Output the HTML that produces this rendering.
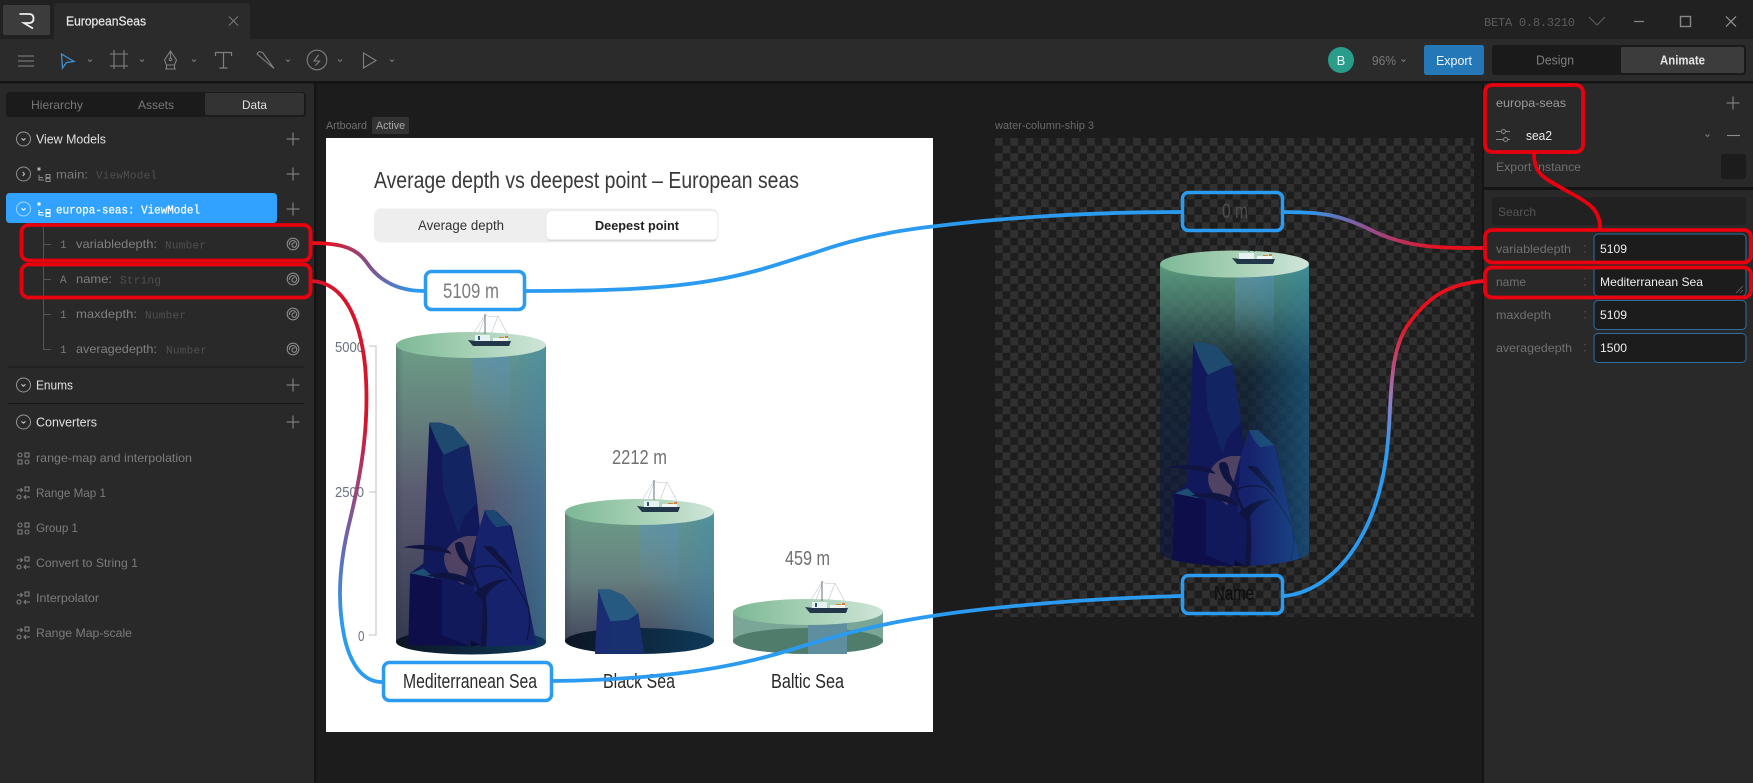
<!DOCTYPE html>
<html><head><meta charset="utf-8"><title>EuropeanSeas</title>
<style>
html,body{margin:0;padding:0;background:#1c1c1c;width:1753px;height:783px;overflow:hidden}
svg{display:block}
text{font-family:"Liberation Sans",sans-serif}
text.m{font-family:"Liberation Mono",monospace}
</style></head><body>
<svg width="1753" height="783" viewBox="0 0 1753 783">
<defs>
<pattern id="chk" x="995" y="138" width="15.34" height="15.34" patternUnits="userSpaceOnUse">
<rect width="15.34" height="15.34" fill="#1d1d1d"/><rect width="7.67" height="7.67" fill="#303030"/><rect x="7.67" y="7.67" width="7.67" height="7.67" fill="#303030"/>
</pattern>
<linearGradient id="top" x1="0" x2="1" y1="0" y2="0"><stop offset="0" stop-color="#7db897"/><stop offset=".5" stop-color="#a6d0b4"/><stop offset="1" stop-color="#cfe5d9"/></linearGradient>
<linearGradient id="bodyA" x1="0" x2="0" y1="0" y2="1"><stop offset="0" stop-color="#6c9c87"/><stop offset=".25" stop-color="#657f7c"/><stop offset=".5" stop-color="#5a5a70"/><stop offset="1" stop-color="#363a50"/></linearGradient>
<linearGradient id="bodyB" x1="0" x2="0" y1="0" y2="1"><stop offset="0" stop-color="#6c9c87"/><stop offset=".5" stop-color="#66807f"/><stop offset="1" stop-color="#45495f"/></linearGradient>
<linearGradient id="bodyD" x1="0" x2="0" y1="0" y2="1"><stop offset="0" stop-color="#5a9a80"/><stop offset=".14" stop-color="#4a7f70" stop-opacity=".85"/><stop offset=".36" stop-color="#10263a" stop-opacity=".7"/><stop offset="1" stop-color="#0c1240" stop-opacity=".65"/></linearGradient>
<linearGradient id="side" x1="0" x2="1" y1="0" y2="0"><stop offset="0" stop-color="#1f2d3d" stop-opacity=".2"/><stop offset=".05" stop-color="#1f2d3d" stop-opacity="0"/><stop offset=".55" stop-color="#3a88b0" stop-opacity="0"/><stop offset="1" stop-color="#3a88b0" stop-opacity=".55"/></linearGradient>
<linearGradient id="sideD" x1="0" x2="1" y1="0" y2="0"><stop offset=".6" stop-color="#1f7fb0" stop-opacity="0"/><stop offset="1" stop-color="#1f7fb0" stop-opacity=".45"/></linearGradient>
<linearGradient id="beam" x1="0" x2="0" y1="0" y2="1"><stop offset="0" stop-color="#5b8fb5" stop-opacity=".65"/><stop offset="1" stop-color="#5b8fb5" stop-opacity="0"/></linearGradient>
<linearGradient id="floor" x1="0" x2="1" y1="0" y2="0"><stop offset="0" stop-color="#0c1524"/><stop offset="1" stop-color="#0f3a5a"/></linearGradient>
<linearGradient id="g1" gradientUnits="userSpaceOnUse" x1="325" y1="0" x2="415" y2="0"><stop offset="0" stop-color="#e8101c"/><stop offset=".5" stop-color="#80508f"/><stop offset="1" stop-color="#2a9bf0"/></linearGradient>
<linearGradient id="g2" gradientUnits="userSpaceOnUse" x1="1305" y1="0" x2="1440" y2="0"><stop offset="0" stop-color="#2a9bf0"/><stop offset=".5" stop-color="#9b4a8a"/><stop offset="1" stop-color="#e8101c"/></linearGradient>
<linearGradient id="g3" gradientUnits="userSpaceOnUse" x1="0" y1="420" x2="0" y2="625"><stop offset="0" stop-color="#d8142a"/><stop offset=".5" stop-color="#7a5aa0"/><stop offset="1" stop-color="#2a9bf0"/></linearGradient>
<linearGradient id="g4" gradientUnits="userSpaceOnUse" x1="0" y1="450" x2="0" y2="320"><stop offset="0" stop-color="#2a9bf0"/><stop offset=".4" stop-color="#9a7ac0"/><stop offset="1" stop-color="#e8101c"/></linearGradient>
<clipPath id="cyl"><path d="M1160 264V552A74.500 14 0 0 0 1309 552V264Z"/></clipPath>
<g id="ship">
<g fill="none" stroke="#c0c7cc" stroke-width=".6"><path d="M17 1L2 25M30 2L42 25M17 3L9 24M30 2L23 20M17 1Q24 4 30 2"/></g>
<path d="M17 0V20" stroke="#67727c" stroke-width="1"/>
<path d="M7 21H22V27H7Z" fill="#e6f2f2"/><path d="M10 22h2v4h-2z" fill="#2a5a7a"/>
<path d="M25 24H40V28H25Z" fill="#eef5f0"/><path d="M31 23h5v1h-5zM37 22h3v2h-3z" fill="#d5803a"/>
<path d="M0 26L8 27H30L43 27L41 32H5Z" fill="#22384a"/>
</g>
<g id="rocks">
<path d="M328 278L310 700L270 730L265 945L650 945L620 800L575 590L530 545L495 540L480 600L470 500L447 345L400 290L360 278Z" fill="#12195a"/>
<path d="M328 278L360 278L400 290L447 345L420 352L372 375Q345 330 328 278Z" fill="#1f4a70"/>
<path d="M365 378L420 352L447 345L470 500V520L432 560L415 610L370 480Z" fill="#122562"/>
<path d="M495 540L522 540L570 585L640 900L650 945L500 950L490 810L460 790L470 620Z" fill="#16226c"/>
<path d="M495 540L522 540L570 585L530 592Q505 570 495 540Z" fill="#1c4672"/>
<path d="M272 730L310 715L345 745L365 750V915L450 948L265 945Z" fill="#0e0f4a"/>
<path d="M272 730L310 715L345 745Z" fill="#1d4f72"/>
<path d="M440 618Q385 630 372 680Q370 730 430 765L470 618Z" fill="#4f4263"/>
<g fill="#0f1440">
<path d="M248 652Q300 640 345 648Q380 650 395 672Q345 660 248 652Z"/>
<path d="M405 640Q430 625 435 660Q440 690 468 722Q440 712 420 685Q405 660 405 640Z"/>
<path d="M320 738Q385 715 445 745Q460 755 465 770Q400 745 320 738Z"/>
<path d="M490 650Q520 640 535 672Q570 705 578 735Q530 690 490 650Z"/>
<path d="M462 790Q510 745 565 748Q520 762 498 800Q505 880 498 950H480Q490 880 488 810Z"/>
</g>
<g fill="none" stroke="#0f1440" stroke-linecap="round">
<path d="M440 690Q460 740 490 810" stroke-width="8"/>
<path d="M465 715Q510 700 545 715Q590 760 625 830Q635 880 620 930" stroke-width="4"/>
</g>
<path d="M452 930L480 945L452 950Z" fill="#0b0e34"/>
</g>
<g id="spiral" fill="none" stroke="#8a8a8a" stroke-width="1.100"><circle r="5.800"/><path d="M-3.500 1A3.600 3.600 0 1 1 2.500 2.800A2.200 2.200 0 1 1 1.800-1"/></g>
<g id="plus" stroke="#8d8d8d" stroke-width="1"><path d="M-6.500 0H6.500M0-6.500V6.500"/></g>
<g id="cdown"><circle r="7" fill="none" stroke="#969696" stroke-width="1"/><path d="M-2-.6L0 1.100L2-.6" fill="none" stroke="#c8c8c8" stroke-width="1.100"/></g>
<g id="vm" fill="none" stroke="#8a8a8a" stroke-width="1"><rect x="-3.500" y="-7.500" width="3" height="3" fill="#b0b0b0" stroke="none"/><path d="M-2 0V5H3M-2 2.500H2"/><rect x="5" y="-.500" width="4" height="3"/><rect x="5" y="3.500" width="4" height="3"/></g>
<g id="grp" fill="none" stroke="#7e7e7e" stroke-width="1.100"><rect x="-5" y="-5" width="4" height="4" rx="2"/><rect x="2" y="-5" width="4" height="4"/><rect x="-5" y="2" width="4" height="4"/><rect x="2" y="2" width="4" height="4" rx="2"/></g>
<g id="conv" fill="none" stroke="#7e7e7e" stroke-width="1.100"><path d="M-6-3H-.500M-2.500-5L-.500-3L-2.500-1"/><rect x="2" y="-6" width="4" height="4"/><circle cx="-4" cy="4" r="2"/><path d="M7 4H1M3 2L1 4L3 6"/></g>
<path id="chev" d="M-2-1L0 1L2-1" fill="none" stroke="#7a7a7a" stroke-width="1"/>
</defs>

<!-- window chrome -->
<rect width="1753" height="783" fill="#1c1c1c"/>
<rect width="1753" height="39" fill="#212121"/>
<rect x="3" y="5" width="47" height="30" rx="2" fill="#3c3c3c"/>
<path d="M19.500 14H29Q33.500 14 33.500 18.500Q33.500 23 29 23H24L33 28.500" fill="none" stroke="#eee" stroke-width="1.800"/>
<path d="M54 39V7Q54 3 58 3H246Q250 3 250 7V39Z" fill="#2b2b2b"/>
<text x="66" y="25.500" font-size="12.500" fill="#e8e8e8" stroke="#e8e8e8" stroke-width=".2" textLength="80" lengthAdjust="spacingAndGlyphs">EuropeanSeas</text>
<path d="M229 16.500L238 25.500M238 16.500L229 25.500" stroke="#777" stroke-width="1.100"/>
<text class="m" x="1484" y="26" font-size="12" fill="#5c5c5c" textLength="91">BETA 0.8.3210</text>
<path d="M1589 17L1597 25L1605 17" fill="none" stroke="#5c5c5c" stroke-width="1.100"/>
<path d="M1634 21.500H1644" stroke="#888" stroke-width="1.200"/>
<rect x="1680.500" y="16.500" width="10" height="10" fill="none" stroke="#888" stroke-width="1.400"/>
<path d="M1726 16.500L1736 26.500M1736 16.500L1726 26.500" stroke="#999" stroke-width="1.200"/>

<!-- toolbar -->
<rect y="39" width="1753" height="42" fill="#2b2b2b"/>
<rect y="81" width="1753" height="2.500" fill="#141414"/>
<path d="M18 56H34M18 61H34M18 66H34" stroke="#868686" stroke-width="1.100"/>
<path d="M61.500 54L74 61.500L66.500 62.500L62.500 68Z" fill="none" stroke="#3f8fd0" stroke-width="1.300"/>
<use href="#chev" x="90" y="60.500"/>
<path d="M110 54H128M110 66H128M114 50V69M124 50V69" stroke="#808080" stroke-width="1.100"/>
<use href="#chev" x="142" y="60.500"/>
<path d="M170.500 51L176.500 60L174.500 65H166.500L164.500 60ZM170.500 51V58M165 69H176M166.500 65V69M174.500 65V69" fill="none" stroke="#808080" stroke-width="1.100"/>
<circle cx="170.500" cy="59.500" r="1.300" fill="none" stroke="#808080"/>
<use href="#chev" x="194" y="60.500"/>
<path d="M215.500 56V52.500H231.500V56M223.500 52.500V68M219.500 68H227.500" fill="none" stroke="#808080" stroke-width="1.200"/>
<path d="M257 54Q259 50 263 53L274 68.500Z" fill="none" stroke="#808080" stroke-width="1.100"/>
<use href="#chev" x="288" y="60.500"/>
<circle cx="317" cy="60" r="9.800" fill="none" stroke="#808080" stroke-width="1.100"/>
<path d="M318.500 55L314 61H319.500L315.500 65.500" fill="none" stroke="#808080" stroke-width="1.100"/>
<use href="#chev" x="340" y="60.500"/>
<path d="M363.500 53L376 60.500L363.500 68Z" fill="none" stroke="#808080" stroke-width="1.100"/>
<use href="#chev" x="392" y="60.500"/>
<circle cx="1341" cy="60" r="13" fill="#2a9d8a"/>
<text x="1341" y="65" font-size="13" fill="#e8f5f2" text-anchor="middle">B</text>
<text x="1372" y="65" font-size="13" fill="#7a7a7a" textLength="24" lengthAdjust="spacingAndGlyphs">96%</text>
<use href="#chev" x="1403.500" y="60.500"/>
<rect x="1424" y="45" width="60" height="30" rx="2.500" fill="#2478b8"/>
<text x="1436" y="65" font-size="13" fill="#f0f6fb" textLength="36" lengthAdjust="spacingAndGlyphs">Export</text>
<rect x="1492" y="45" width="254" height="30" rx="3" fill="#1a1a1a"/>
<rect x="1621" y="47" width="123" height="26" rx="2" fill="#3c3c3c"/>
<text x="1536" y="64.500" font-size="12.500" fill="#7e7e7e" textLength="38" lengthAdjust="spacingAndGlyphs">Design</text>
<text x="1660" y="64.500" font-size="12.500" fill="#e4e4e4" font-weight="bold" textLength="45" lengthAdjust="spacingAndGlyphs">Animate</text>

<!-- left panel -->
<rect y="83.500" width="314" height="700" fill="#292929"/>
<rect x="6" y="92" width="300" height="25" rx="3" fill="#1b1b1b"/>
<rect x="205" y="93" width="99" height="22" rx="2" fill="#333"/>
<text x="31" y="109" font-size="12" fill="#777" textLength="52" lengthAdjust="spacingAndGlyphs">Hierarchy</text>
<text x="138" y="109" font-size="12" fill="#777" textLength="36" lengthAdjust="spacingAndGlyphs">Assets</text>
<text x="242" y="109" font-size="12" fill="#e0e0e0" textLength="25" lengthAdjust="spacingAndGlyphs">Data</text>

<use href="#cdown" x="23.500" y="139"/>
<text x="36" y="143.500" font-size="12.500" fill="#e0e0e0" textLength="70" lengthAdjust="spacingAndGlyphs">View Models</text>
<use href="#plus" x="293" y="139"/>
<g transform="translate(23.500 174)"><circle r="7" fill="none" stroke="#8f8f8f"/><path d="M-.800-2L1 0L-.800 2" fill="none" stroke="#c0c0c0" stroke-width="1.100"/></g>
<use href="#vm" x="41" y="175"/>
<text x="56" y="178.500" font-size="12" fill="#7a7a7a" textLength="32" lengthAdjust="spacingAndGlyphs">main:</text>
<text class="m" x="96" y="178.500" font-size="11" fill="#4f4f4f" textLength="61">ViewModel</text>
<use href="#plus" x="293" y="174"/>
<path d="M6 197Q6 193 10 193H273Q277 193 277 197V219Q277 223 273 223H10Q6 223 6 219Z" fill="#31a2ff"/>
<g transform="translate(23.500 209)"><circle r="7" fill="none" stroke="#a5d7ff"/><path d="M-2-.6L0 1.100L2-.6" fill="none" stroke="#fff" stroke-width="1.100"/></g>
<g transform="translate(41 210)" fill="none" stroke="#fff" stroke-width="1"><rect x="-3.500" y="-7.500" width="3" height="3" fill="#fff" stroke="none"/><path d="M-2 0V5H3M-2 2.500H2"/><rect x="5" y="-.500" width="4" height="3"/><rect x="5" y="3.500" width="4" height="3"/></g>
<text class="m" x="56" y="213.500" font-size="12" fill="#fff" stroke="#fff" stroke-width=".25" textLength="144" lengthAdjust="spacingAndGlyphs">europa-seas: ViewModel</text>
<use href="#plus" x="293" y="209"/>
<path d="M43.500 224V349.500H51M43.500 244.500H51M43.500 279.500H51M43.500 314.500H51" fill="none" stroke="#555" stroke-width="1"/>
<text class="m" x="60" y="248" font-size="11" fill="#7a7a7a">1</text>
<text class="m" x="60" y="283" font-size="11" fill="#7a7a7a">A</text>
<text class="m" x="60" y="318" font-size="11" fill="#7a7a7a">1</text>
<text class="m" x="60" y="353" font-size="11" fill="#7a7a7a">1</text>
<text x="76" y="248" font-size="12" fill="#7f7f7f" textLength="81" lengthAdjust="spacingAndGlyphs">variabledepth:</text>
<text class="m" x="165" y="248.500" font-size="11" fill="#505050" textLength="41">Number</text>
<text x="76" y="283" font-size="12" fill="#7f7f7f" textLength="36" lengthAdjust="spacingAndGlyphs">name:</text>
<text class="m" x="120" y="283.500" font-size="11" fill="#505050" textLength="41">String</text>
<text x="76" y="318" font-size="12" fill="#7f7f7f" textLength="61" lengthAdjust="spacingAndGlyphs">maxdepth:</text>
<text class="m" x="145" y="318.500" font-size="11" fill="#505050" textLength="41">Number</text>
<text x="76" y="353" font-size="12" fill="#7f7f7f" textLength="81" lengthAdjust="spacingAndGlyphs">averagedepth:</text>
<text class="m" x="166" y="353.500" font-size="11" fill="#505050" textLength="41">Number</text>
<use href="#spiral" x="293" y="244"/><use href="#spiral" x="293" y="279"/><use href="#spiral" x="293" y="314"/><use href="#spiral" x="293" y="349"/>
<path d="M8 367H304M8 403.500H304" stroke="#161616" stroke-width="1"/>
<use href="#cdown" x="23.500" y="385"/>
<text x="36" y="389.500" font-size="12.500" fill="#e0e0e0" textLength="37" lengthAdjust="spacingAndGlyphs">Enums</text>
<use href="#plus" x="293" y="385"/>
<use href="#cdown" x="23.500" y="422"/>
<text x="36" y="426.500" font-size="12.500" fill="#e0e0e0" textLength="61" lengthAdjust="spacingAndGlyphs">Converters</text>
<use href="#plus" x="293" y="422"/>
<use href="#grp" x="23" y="458"/>
<text x="36" y="462" font-size="12" fill="#7c7c7c" textLength="156" lengthAdjust="spacingAndGlyphs">range-map and interpolation</text>
<use href="#conv" x="23" y="493"/>
<text x="36" y="497" font-size="12" fill="#7c7c7c" textLength="70" lengthAdjust="spacingAndGlyphs">Range Map 1</text>
<use href="#grp" x="23" y="528"/>
<text x="36" y="532" font-size="12" fill="#7c7c7c" textLength="42" lengthAdjust="spacingAndGlyphs">Group 1</text>
<use href="#conv" x="23" y="563"/>
<text x="36" y="567" font-size="12" fill="#7c7c7c" textLength="102" lengthAdjust="spacingAndGlyphs">Convert to String 1</text>
<use href="#conv" x="23" y="598"/>
<text x="36" y="602" font-size="12" fill="#7c7c7c" textLength="63" lengthAdjust="spacingAndGlyphs">Interpolator</text>
<use href="#conv" x="23" y="633"/>
<text x="36" y="637" font-size="12" fill="#7c7c7c" textLength="96" lengthAdjust="spacingAndGlyphs">Range Map-scale</text>
<rect x="314" y="83" width="2.500" height="700" fill="#141414"/>

<!-- canvas labels -->
<text x="326" y="129" font-size="11" fill="#707070" textLength="41" lengthAdjust="spacingAndGlyphs">Artboard</text>
<rect x="372" y="117" width="37" height="17" rx="2" fill="#333"/>
<text x="376" y="129" font-size="11" fill="#a8a8a8" textLength="29" lengthAdjust="spacingAndGlyphs">Active</text>
<text x="995" y="129" font-size="11" fill="#6a6a6a" textLength="99" lengthAdjust="spacingAndGlyphs">water-column-ship 3</text>

<!-- left artboard -->
<rect x="326" y="138" width="607" height="594" fill="#fff"/>
<text x="374" y="188" font-size="23" fill="#3a3a3a" textLength="425" lengthAdjust="spacingAndGlyphs">Average depth vs deepest point – European seas</text>
<rect x="374" y="208.500" width="344" height="34" rx="7" fill="#eeeeee"/>
<rect x="546" y="210.500" width="172" height="30" rx="6" fill="#fff" stroke="#dcdcdc" stroke-width=".6"/>
<rect x="548" y="239.500" width="168" height="1.500" rx=".7" fill="#d8d8d8"/>
<text x="418" y="230" font-size="13.500" fill="#333" textLength="86" lengthAdjust="spacingAndGlyphs">Average depth</text>
<text x="595" y="230" font-size="13" fill="#222" font-weight="bold" textLength="84" lengthAdjust="spacingAndGlyphs">Deepest point</text>

<path d="M369 346H376V635H369M369 492H376" fill="none" stroke="#c0c0c0" stroke-width="1"/>
<text x="335" y="352" font-size="15" fill="#6b7280" textLength="29" lengthAdjust="spacingAndGlyphs">5000</text>
<text x="335" y="497" font-size="15" fill="#6b7280" textLength="29" lengthAdjust="spacingAndGlyphs">2500</text>
<text x="358" y="641" font-size="15" fill="#6b7280" textLength="6.500" lengthAdjust="spacingAndGlyphs">0</text>

<!-- Mediterranean cylinder -->
<path d="M396 345V642H546V345Z" fill="url(#bodyA)"/>
<path d="M396 345V642H546V345Z" fill="url(#side)"/>
<rect x="471" y="352" width="39" height="70" fill="url(#beam)"/>
<ellipse cx="471" cy="642" rx="75" ry="12.500" fill="url(#floor)"/>
<use href="#rocks" transform="translate(320 330) scale(.33333)"/>
<ellipse cx="471" cy="345" rx="75" ry="13" fill="url(#top)"/>
<use href="#ship" x="468" y="314"/>

<!-- Black sea cylinder -->
<path d="M565 512V641H714V512Z" fill="url(#bodyB)"/>
<path d="M565 512V641H714V512Z" fill="url(#side)"/>
<rect x="639.500" y="520" width="39" height="70" fill="url(#beam)"/>
<ellipse cx="639.500" cy="641" rx="74.500" ry="13" fill="url(#floor)"/>
<g transform="translate(540 430) scale(.33333)">
<path d="M175 478L210 478L250 495L295 550L312 672H165Z" fill="#1a2c72"/>
<path d="M175 478L210 478L250 495L295 550L265 570L212 574Q190 530 175 478Z" fill="#265a80"/>
<path d="M212 574L265 570L295 550L312 672H208Z" fill="#18306f"/>
</g>
<ellipse cx="639.500" cy="512" rx="74.500" ry="13" fill="url(#top)"/>
<use href="#ship" x="637" y="480"/>

<!-- Baltic cylinder -->
<path d="M733 612V641A75 13 0 0 0 883 641V612Z" fill="#7aa697"/>
<ellipse cx="808" cy="641" rx="75" ry="13" fill="#507c6b"/>
<rect x="808" y="622" width="39" height="32" fill="#5f8f9f"/>
<ellipse cx="808" cy="612" rx="75" ry="13" fill="url(#top)"/>
<use href="#ship" x="805" y="581"/>

<text x="612" y="464" font-size="20" fill="#707070" textLength="55" lengthAdjust="spacingAndGlyphs">2212 m</text>
<text x="785" y="565" font-size="20" fill="#707070" textLength="45" lengthAdjust="spacingAndGlyphs">459 m</text>
<text x="443" y="298" font-size="21" fill="#7c7c7c" textLength="56" lengthAdjust="spacingAndGlyphs">5109 m</text>
<text x="403" y="688" font-size="20" fill="#2a2a2a" textLength="134" lengthAdjust="spacingAndGlyphs">Mediterranean Sea</text>
<text x="603" y="688" font-size="20" fill="#2a2a2a" textLength="72" lengthAdjust="spacingAndGlyphs">Black Sea</text>
<text x="771" y="688" font-size="20" fill="#2a2a2a" textLength="73" lengthAdjust="spacingAndGlyphs">Baltic Sea</text>

<!-- right artboard -->
<rect x="995" y="138" width="479" height="479" fill="url(#chk)"/>
<g clip-path="url(#cyl)">
<rect x="1160" y="264" width="149" height="305" fill="url(#bodyD)"/>
<rect x="1235" y="272" width="39" height="70" fill="url(#beam)"/>
<use href="#rocks" transform="translate(1084 250) scale(.33333)"/>
<rect x="1160" y="264" width="149" height="305" fill="url(#sideD)"/>
</g>
<ellipse cx="1234.500" cy="264" rx="74.500" ry="13.500" fill="url(#top)"/>
<g transform="translate(1232 232)">
<path d="M17 0V20M30 2L22 20" stroke="#2a3a44" stroke-width=".7" fill="none"/>
<path d="M7 21H22V27H7Z" fill="#e6f2f2"/><path d="M25 24H40V28H25Z" fill="#eef5f0"/><path d="M31 23h5v1h-5zM37 22h3v2h-3z" fill="#d5803a"/>
<path d="M0 26L8 27H30L43 27L41 32H5Z" fill="#22384a"/>
</g>
<text x="1222" y="218" font-size="21" fill="#4c4c4c" textLength="26" lengthAdjust="spacingAndGlyphs">0 m</text>
<text x="1214" y="600" font-size="20" fill="#0c0c0c" textLength="40" lengthAdjust="spacingAndGlyphs">Name</text>

<!-- right panel -->
<rect x="1482" y="83" width="2" height="700" fill="#141414"/>
<rect x="1484" y="83.500" width="269" height="700" fill="#292929"/>
<rect x="1484" y="187" width="269" height="3" fill="#141414"/>
<text x="1496" y="107" font-size="12" fill="#9a9a9a" textLength="70" lengthAdjust="spacingAndGlyphs">europa-seas</text>
<use href="#plus" x="1733" y="103"/>
<path d="M1496 131.500H1501M1506 131.500H1510M1496 139.500H1503M1508 139.500H1510" stroke="#888" stroke-width="1"/>
<circle cx="1503.500" cy="131.500" r="2" fill="none" stroke="#888"/><circle cx="1505.500" cy="139.500" r="2" fill="none" stroke="#888"/>
<text x="1526" y="140" font-size="12.500" fill="#eaeaea" textLength="26" lengthAdjust="spacingAndGlyphs">sea2</text>
<use href="#chev" x="1707.500" y="135.500"/>
<path d="M1727 135.500H1740" stroke="#8d8d8d" stroke-width="1.100"/>
<text x="1496" y="171" font-size="12" fill="#6f6f6f" textLength="85" lengthAdjust="spacingAndGlyphs">Export Instance</text>
<rect x="1721" y="154" width="25" height="25" rx="3" fill="#1c1c1c"/>
<rect x="1492" y="197" width="254" height="28" rx="3" fill="#212121"/>
<text x="1498" y="216" font-size="12" fill="#555" textLength="38" lengthAdjust="spacingAndGlyphs">Search</text>
<text x="1496" y="253" font-size="12" fill="#707070" textLength="75" lengthAdjust="spacingAndGlyphs">variabledepth</text>
<text x="1496" y="286" font-size="12" fill="#707070" textLength="30" lengthAdjust="spacingAndGlyphs">name</text>
<text x="1496" y="319" font-size="12" fill="#707070" textLength="55" lengthAdjust="spacingAndGlyphs">maxdepth</text>
<text x="1496" y="352" font-size="12" fill="#707070" textLength="76" lengthAdjust="spacingAndGlyphs">averagedepth</text>
<path d="M1585 245v1.500M1585 251v1.500M1585 278v1.500M1585 284v1.500M1585 311v1.500M1585 317v1.500M1585 344v1.500M1585 350v1.500" stroke="#555" stroke-width="1.200"/>
<g fill="#1c1c1c" stroke="#2e6f9f" stroke-width="1">
<rect x="1594" y="234" width="152" height="29" rx="4"/>
<rect x="1594" y="267" width="152" height="29" rx="4"/>
<rect x="1594" y="300.500" width="152" height="29" rx="4"/>
<rect x="1594" y="333.500" width="152" height="29" rx="4"/>
</g>
<text x="1600" y="253" font-size="12" fill="#eee" textLength="27" lengthAdjust="spacingAndGlyphs">5109</text>
<text x="1600" y="286" font-size="12" fill="#eee" textLength="103" lengthAdjust="spacingAndGlyphs">Mediterranean Sea</text>
<text x="1600" y="319" font-size="12" fill="#eee" textLength="27" lengthAdjust="spacingAndGlyphs">5109</text>
<text x="1600" y="352" font-size="12" fill="#eee" textLength="27" lengthAdjust="spacingAndGlyphs">1500</text>
<path d="M1736 293L1743 286M1740 293L1743 290" stroke="#6a6a6a" stroke-width=".8"/>

<!-- connectors -->
<g fill="none" stroke-width="3.800" stroke-linecap="round">
<path d="M312 243C345 243 358 250 367 263C378 279 395 291 424 291" stroke="url(#g1)"/>
<path d="M526 291C590 291 660 290 715 280C760 272 790 260 814 253C850 240 890 231 937 226C1000 218 1090 212 1181 212" stroke="#2a9bf0"/>
<path d="M1284 212C1320 212 1340 214 1375 232C1410 248 1440 248 1483 248" stroke="url(#g2)"/>
<path d="M312 281C345 283 360 320 365 365C370 420 362 470 350 520C340 560 336 600 345 640C352 668 365 682 382 682" stroke="url(#g3)"/>
<path d="M553 681C640 680 720 672 790 650C860 628 900 620 960 612C1040 602 1110 598 1181 596" stroke="#2a9bf0"/>
<path d="M1284 596C1330 592 1380 540 1388 440C1392 400 1388 350 1410 322C1430 295 1450 284 1483 281" stroke="url(#g4)"/>
<path d="M1534 154C1534 175 1545 178 1565 190C1590 203 1600 210 1600 228" stroke="#e8000f"/>
</g>
<!-- red highlight boxes -->
<g fill="none" stroke="#e8000f" stroke-width="3.800">
<rect x="21.500" y="225" width="289" height="35.500" rx="7"/>
<rect x="21.500" y="264.500" width="289" height="33" rx="7"/>
<rect x="1485" y="85" width="98" height="67" rx="7"/>
<rect x="1485" y="230" width="266" height="32.500" rx="7"/>
<rect x="1485" y="267.500" width="266" height="30" rx="7"/>
</g>
<!-- blue highlight boxes -->
<g fill="none" stroke="#2a9bf0" stroke-width="3.500">
<rect x="425.500" y="271.500" width="99" height="38" rx="6"/>
<rect x="1182.500" y="192.500" width="100" height="38" rx="6"/>
<rect x="1182.500" y="575.500" width="100" height="38" rx="6"/>
<rect x="383.500" y="662.500" width="168" height="38" rx="6"/>
</g>
</svg>
</body></html>
